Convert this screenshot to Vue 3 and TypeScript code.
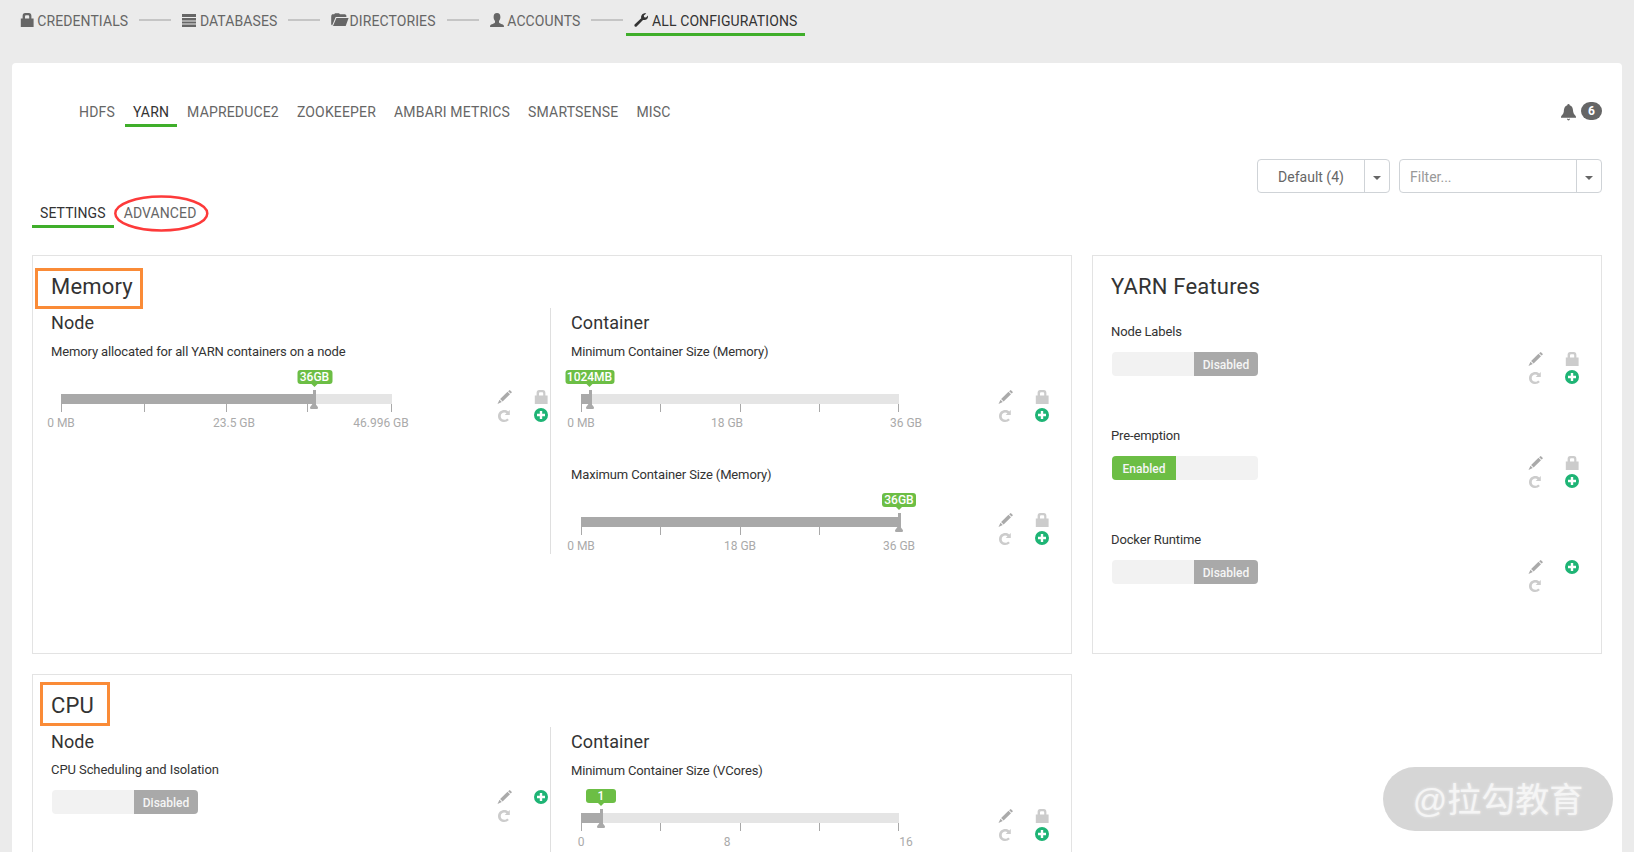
<script setup lang="ts">
import { defineComponent, h } from 'vue'

type IconName = 'lock' | 'menu' | 'folder' | 'user' | 'wrench' | 'pencil' | 'redo' | 'plus' | 'bell'

interface Mark { at: number; text: string }
interface Slider {
  kind: 'slider'
  label: string
  width: number
  ticks: number[]
  marks: Mark[]
  value: string
  handle: number
  tag: number
  tagWidth: number
}
interface Toggle { kind: 'toggle'; label: string; on: boolean; locked: boolean }
interface Section { title: string; items: (Slider | Toggle)[] }

const paths: Record<IconName, string> = {
  lock: 'M.8 5.6H2.6V3Q2.6 0 5.2 0H8.8Q11.4 0 11.4 3V5.6H13.6V14H.8ZM5 5.6H9.2V3.4Q9.2 2.3 8.2 2.3H6Q5 2.3 5 3.4Z',
  menu: 'M0 1H14V4H0ZM0 5H14V7.4H0ZM0 8.4H14V10.6H0ZM0 11.4H14V14H0Z',
  folder: 'M.4 2.2L1.2 1.2H3.2L4 .2H8L9 1.2H14.2L15.4 2.6V4H4.7L1.1 12.6L.2 11.5V4ZM5.4 5H17.6L14.7 13H2Z',
  user: 'M7 0C9.3 0 10.5 1.6 10.4 4.2C10.3 6 9.7 7.1 9 8V9.5C9.2 10.5 13.2 11.3 13.8 12.4L14 14H0L.2 12.4C.8 11.3 4.8 10.5 5 9.5V8C4.3 7.1 3.7 6 3.6 4.2C3.5 1.6 4.7 0 7 0Z',
  wrench: 'M12.3 .4L9.8 2.5L10.2 4.2L12 4.4L14 2.4C14.4 4.6 13.3 6.7 10.9 7.1L9 7L2.6 13.5Q1.8 14.2.8 13.4Q-.1 12.4.6 11.6L7.2 5.3C6.5 1.9 9.3-.5 12.3.4Z',
  pencil: 'M12.1.4Q12.5-.1 13 .3L14.6 1.8Q15 2.3 14.6 2.7L13.6 3.6L11.1 1.3ZM10.5 1.8L13 4.2L5.6 11.6L3.1 9.1ZM2.5 9.8L4.8 12.1L.5 14Z',
  redo: 'M12.8 1V6H7.7L9.5 4.3C7.5 2.7 3.7 3.8 3.7 7.2C3.7 10.6 8.2 12 10.2 9.6L11.9 11C8.7 14.7 1 13.1 1 7.2C1 1.5 7.7-.5 11.2 2.5Z',
  plus: 'M7 0A7 7 0 1 1 7 14A7 7 0 1 1 7 0ZM5.8 3V5.8H3V8.2H5.8V11H8.2V8.2H11V5.8H8.2V3Z',
  bell: 'M7.5 0Q8.7 0 8.7 1.2C11.6 2 12 5 12.2 7.7C12.5 10.2 14.7 11.3 15 12.7V13.8H0V12.7C.3 11.3 2.5 10.2 2.8 7.7C3 5 3.4 2 6.3 1.2Q6.3 0 7.5 0ZM6 14.8H6.9Q7.5 15.6 8.1 14.8H9Q8.8 16.6 7.5 16.6Q6.2 16.6 6 14.8Z',
}

const Glyph = defineComponent({
  props: { name: { type: String, required: true }, w: { type: Number, default: 14 }, h: { type: Number, default: 14 } },
  setup(props) {
    return () =>
      h('svg', { width: props.w, height: props.h, viewBox: `0 0 ${props.w} ${props.h}`, class: 'glyph', overflow: 'visible' }, [
        h('path', { d: paths[props.name as IconName], fill: 'currentColor', 'fill-rule': 'evenodd' }),
      ])
  },
})

const steps: { icon: IconName; text: string; w: number; key: string; active?: boolean }[] = [
  { icon: 'lock', text: 'CREDENTIALS', w: 14, key: 'credentials' },
  { icon: 'menu', text: 'DATABASES', w: 14, key: 'databases' },
  { icon: 'folder', text: 'DIRECTORIES', w: 18, key: 'directories' },
  { icon: 'user', text: 'ACCOUNTS', w: 14, key: 'accounts' },
  { icon: 'wrench', text: 'ALL CONFIGURATIONS', w: 14, key: 'all', active: true },
]
const services = ['HDFS', 'YARN', 'MAPREDUCE2', 'ZOOKEEPER', 'AMBARI METRICS', 'SMARTSENSE', 'MISC']

const wideTicks = [0, 79, 159, 238, 317]
const memory: Section[] = [
  {
    title: 'Node',
    items: [{
      kind: 'slider', label: 'Memory allocated for all YARN containers on a node', width: 331,
      ticks: [0, 83, 165, 246, 330],
      marks: [{ at: 0, text: '0 MB' }, { at: 173, text: '23.5 GB' }, { at: 320, text: '46.996 GB' }],
      value: '36GB', handle: 252, tag: 253.5, tagWidth: 35,
    }],
  },
  {
    title: 'Container',
    items: [
      {
        kind: 'slider', label: 'Minimum Container Size (Memory)', width: 318, ticks: wideTicks,
        marks: [{ at: 0, text: '0 MB' }, { at: 146, text: '18 GB' }, { at: 325, text: '36 GB' }],
        value: '1024MB', handle: 8, tag: 8.5, tagWidth: 49,
      },
      {
        kind: 'slider', label: 'Maximum Container Size (Memory)', width: 318, ticks: wideTicks.slice(0, 4),
        marks: [{ at: 0, text: '0 MB' }, { at: 159, text: '18 GB' }, { at: 318, text: '36 GB' }],
        value: '36GB', handle: 317, tag: 318, tagWidth: 34,
      },
    ],
  },
]
const cpu: Section[] = [
  { title: 'Node', items: [{ kind: 'toggle', label: 'CPU Scheduling and Isolation', on: false, locked: false }] },
  {
    title: 'Container',
    items: [{
      kind: 'slider', label: 'Minimum Container Size (VCores)', width: 318, ticks: wideTicks,
      marks: [{ at: 0, text: '0' }, { at: 146, text: '8' }, { at: 325, text: '16' }],
      value: '1', handle: 19, tag: 20, tagWidth: 30,
    }],
  },
]
const panels = [
  { title: 'Memory', key: 'memory', sections: memory },
  { title: 'CPU', key: 'cpu', sections: cpu },
]
const features: Toggle[] = [
  { kind: 'toggle', label: 'Node Labels', on: false, locked: true },
  { kind: 'toggle', label: 'Pre-emption', on: true, locked: true },
  { kind: 'toggle', label: 'Docker Runtime', on: false, locked: false },
]
const px = (n: number) => `${n}px`
</script>

<template>
  <div class="page">
    <nav class="steps">
      <template v-for="(s, i) in steps" :key="s.key">
        <i v-if="i" class="rail"></i>
        <a class="step" :class="[s.key, { active: s.active }]">
          <Glyph :name="s.icon" :w="s.w" /><span>{{ s.text }}</span>
        </a>
      </template>
    </nav>

    <main class="sheet">
      <div class="services">
        <a v-for="s in services" :key="s" class="tab" :class="{ active: s === 'YARN' }">{{ s }}</a>
        <div class="alerts"><Glyph name="bell" :w="15" :h="17" /><b>6</b></div>
      </div>

      <div class="filters">
        <div class="combo group"><span>Default (4)</span><i><em></em></i></div>
        <div class="combo search"><span>Filter...</span><i><em></em></i></div>
      </div>

      <div class="modes">
        <a class="tab active">SETTINGS</a>
        <a class="tab advanced">ADVANCED
          <svg class="ring" width="96" height="38" viewBox="0 0 96 38"><ellipse cx="48.3" cy="19.5" rx="46" ry="17" fill="none" stroke="#fd3a3a" stroke-width="2.5" /></svg>
        </a>
      </div>

      <div class="columns">
        <div class="left">
          <section v-for="p in panels" :key="p.key" class="panel" :class="p.key">
            <h2>{{ p.title }}<i class="frame"></i></h2>
            <div class="split">
              <div v-for="sec in p.sections" :key="sec.title" class="half">
                <h3>{{ sec.title }}</h3>
                <div v-for="it in sec.items" :key="it.label" class="item" :class="`${it.kind}-item`">
                  <div class="control">
                    <label>{{ it.label }}</label>
                    <div v-if="it.kind === 'toggle'" class="switch" :class="{ on: it.on }"><b>{{ it.on ? 'Enabled' : 'Disabled' }}</b></div>
                    <div v-else class="slider" :style="{ width: px(it.width) }">
                      <div class="fill" :style="{ width: px(it.handle) }"></div>
                      <i v-for="t in it.ticks" :key="t" class="tick" :style="{ left: px(t) }"></i>
                      <span v-for="m in it.marks" :key="m.text" class="mark" :style="{ left: px(m.at) }">{{ m.text }}</span>
                      <i class="handle" :style="{ left: px(it.handle) }"></i>
                      <b class="tag" :style="{ left: px(it.tag), width: px(it.tagWidth) }">{{ it.value }}</b>
                    </div>
                  </div>
                  <div class="tools">
                    <div><Glyph name="pencil" class="pen" /><Glyph name="redo" class="pale" /></div>
                    <div><Glyph v-if="it.kind === 'slider' || it.locked" name="lock" class="pale" /><Glyph name="plus" class="add" /></div>
                  </div>
                </div>
              </div>
            </div>
          </section>
        </div>

        <section class="panel features">
          <h2>YARN Features</h2>
          <div v-for="f in features" :key="f.label" class="item">
            <div class="control">
              <label>{{ f.label }}</label>
              <div class="switch" :class="{ on: f.on }"><b>{{ f.on ? 'Enabled' : 'Disabled' }}</b></div>
            </div>
            <div class="tools">
              <div><Glyph name="pencil" class="pen" /><Glyph name="redo" class="pale" /></div>
              <div><Glyph v-if="f.locked" name="lock" class="pale" /><Glyph name="plus" class="add" /></div>
            </div>
          </div>
        </section>
      </div>
    </main>
    <div class="watermark">@拉勾教育</div>
  </div>
</template>

<style>
html, body { margin: 0; overflow: hidden; background: #ebebeb; }
</style>

<style scoped>
* { box-sizing: border-box; }
.page { position: relative; width: 1634px; height: 852px; overflow: hidden; background: #ebebeb; font: 14px/20px Roboto, sans-serif; color: #666; }
h2, h3 { margin: 0; font-weight: 400; color: #333; }
i, em { font-style: normal; }
.glyph { display: block; flex: none; }

.steps { display: flex; height: 63px; padding: 11px 0 0 11.5px; letter-spacing: .1px; }
.step { display: flex; height: 25px; padding: 2px 8px 0; border-bottom: 3px solid transparent; white-space: nowrap; }
.step span { margin: -2px 0 0 3.7px; }
.step.directories span { margin-left: 0; }
.step.active { color: #333; border-color: #3fae2a; }
.rail { width: 32px; height: 2px; margin: 8px 3px 0; background: #c5c5c5; }

.sheet { margin: 0 12px; width: 1610px; height: 800px; background: #fff; border-radius: 4px 4px 0 0; padding: 39px 20px 0; }
.services { display: flex; height: 57px; padding-left: 39px; gap: 2px; letter-spacing: .17px; }
.tab { height: 25px; padding: 0 8px; border-bottom: 3px solid transparent; white-space: nowrap; }
.tab.active { color: #333; border-color: #3fae2a; }
.alerts { display: flex; gap: 5px; margin-left: auto; letter-spacing: 0; }
.alerts .glyph { margin-top: 2px; }
.alerts b { width: 21px; height: 18px; border-radius: 9px; background: #666; color: #fff; font: 700 12px/18px Roboto, sans-serif; text-align: center; }

.filters { display: flex; justify-content: flex-end; gap: 9px; }
.combo { display: flex; height: 34px; border: 1px solid #cfd3d7; border-radius: 4px; line-height: 34px; }
.combo span { flex: 1; }
.combo i { width: 25px; border-left: 1px solid #cfd3d7; display: flex; justify-content: center; align-items: center; }
.combo em { border: 4px solid transparent; border-top-color: #666; border-bottom: 0; margin-top: 4px; }
.group { width: 133px; }
.group span { text-align: center; }
.search { width: 203px; }
.search span { padding-left: 10px; color: #999; }

.modes { display: flex; height: 52px; margin-top: 10px; gap: 2px; letter-spacing: .1px; }
.advanced { position: relative; }
.ring { position: absolute; left: -3px; top: -9px; }

.columns { display: flex; gap: 20px; }
.left { width: 1040px; }
.panel { border: 1px solid #e3e3e3; padding-top: 15px; height: 399px; margin-bottom: 20px; }
.features { width: 510px; }
h2 { position: relative; height: 37px; padding-left: 18px; font-size: 22px; line-height: 31px; letter-spacing: .2px; }
.frame { position: absolute; border: 3px solid #fa8b37; }
.memory .frame { left: 2px; top: -3px; width: 108px; height: 41px; }
.cpu .frame { left: 7px; top: -8px; width: 70px; height: 44px; }
.split { display: flex; }
.half { width: 517px; }
.half + .half { width: 521px; border-left: 1px solid #dfdfdf; height: 246px; padding-left: 2px; }
h3 { padding: 4px 0 0 18px; font-size: 18px; line-height: 22px; height: 30px; letter-spacing: .1px; }
.item { display: flex; justify-content: space-between; height: 123px; padding-left: 18px; }
label { display: block; font-size: 13px; line-height: 17px; padding-top: 5px; color: #333; letter-spacing: -.13px; }
.toggle-item label { padding-top: 4px; letter-spacing: -.08px; }
.slider { position: relative; margin: 34px 0 0 10px; height: 10px; background: #e5e5e5; }
.fill { height: 10px; background: #a9a9a9; }
.tick { position: absolute; top: 10px; width: 1px; height: 8px; background: #a9a9a9; }
.mark { position: absolute; top: 20px; transform: translateX(-50%); font-size: 12px; line-height: 18px; color: #aaa; white-space: nowrap; }
.handle { position: absolute; top: -4px; width: 3px; height: 15px; background: #a9a9a9; }
.handle::after { content: ''; position: absolute; left: -3px; top: 14px; width: 8px; height: 5px; background: #a9a9a9; clip-path: polygon(30% 0, 70% 0, 100% 65%, 100% 85%, 90% 100%, 10% 100%, 0 85%, 0 65%); }
.tag { position: absolute; top: -24px; height: 14px; border-radius: 3px; transform: translateX(-50%); background: #6cbe45; color: #fff; font: 500 12px/14px Roboto, sans-serif; text-align: center; }
.tag::after { content: ''; position: absolute; left: 50%; margin-left: -4px; top: 13px; border: 4px solid transparent; border-top-color: #6cbe45; border-bottom: 0; }
.tools { display: flex; gap: 23px; padding: 52px 2px 0 0; color: #aaa; }
.half + .half .tools { padding-right: 22px; }
.tools > div { width: 14px; display: flex; flex-direction: column; gap: 4px; }
.tools > div:first-child { gap: 5px; }
.pale { color: #ccc; }
.add { color: #1eb475; }
.switch { display: flex; justify-content: flex-end; width: 146px; height: 24px; margin: 12px 0 0 1px; border-radius: 4px; background: #f2f2f2; overflow: hidden; }
.switch b { width: 64px; background: #a9a9a9; color: #f5f5f5; font: 500 12px/26px Roboto, sans-serif; text-align: center; }
.switch.on { justify-content: flex-start; }
.switch.on b { background: #6cbe45; }
.toggle-item .tools { padding-top: 33px; }
.features .item { height: 104px; }
.features label { padding-top: 15px; }
.features .tools { padding: 44px 22px 0 0; }

.watermark { position: absolute; left: 1383px; top: 767px; width: 230px; height: 64px; border-radius: 32px; background: #d6d6d6; color: #f5f5f5; font: 34px/66px "Liberation Sans", "Noto Sans CJK SC", sans-serif; text-align: center; text-shadow: 0 0 3px #f0f0f0; }
</style>
